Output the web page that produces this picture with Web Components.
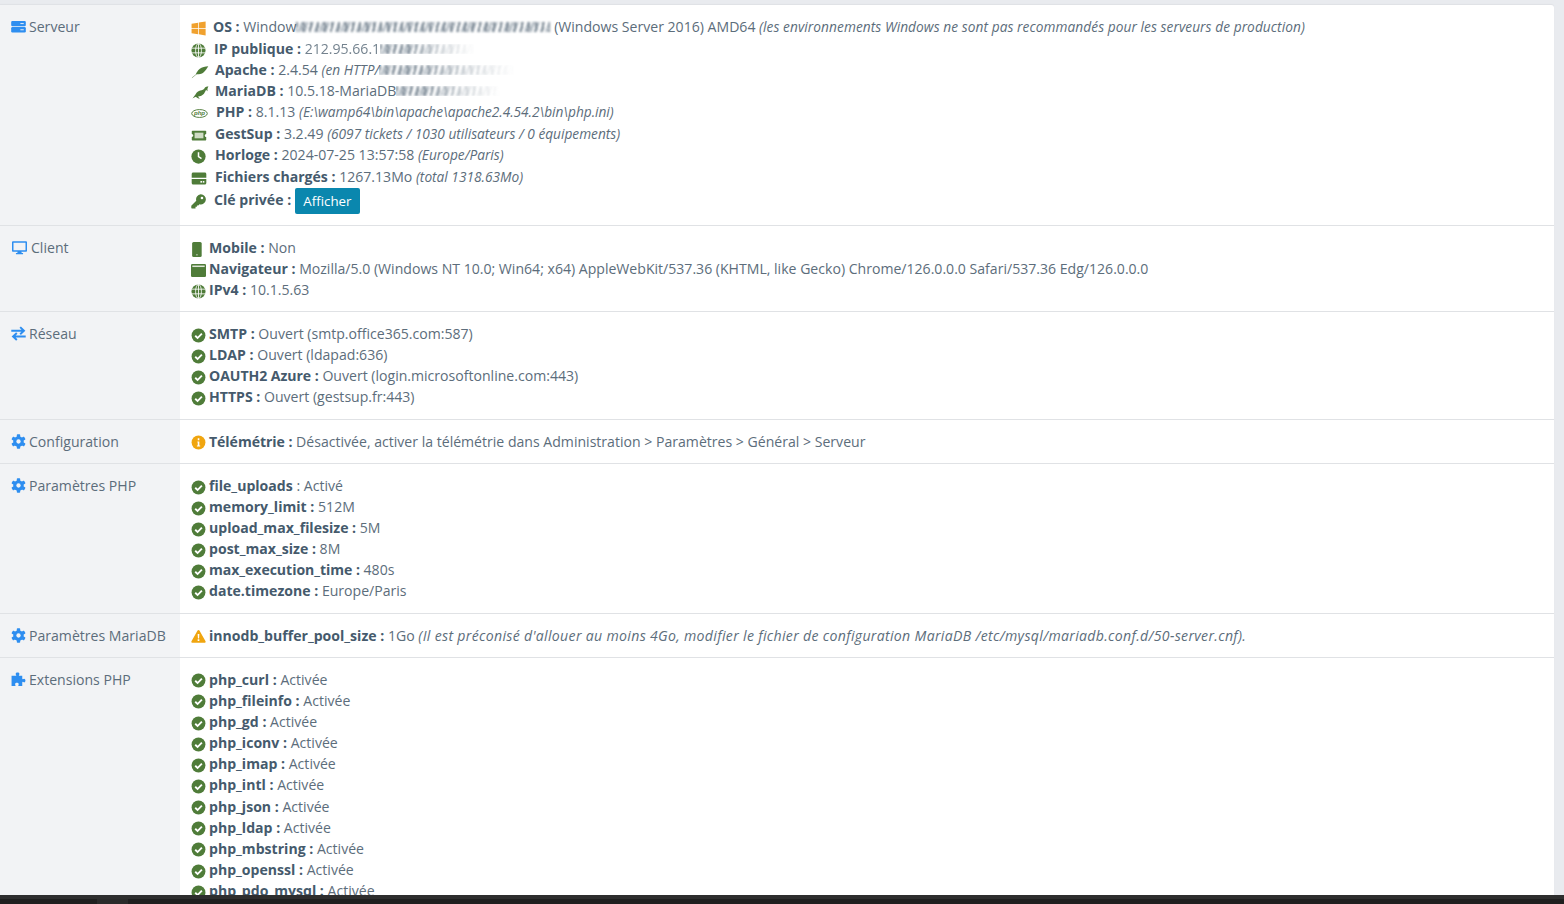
<!DOCTYPE html>
<html lang="fr">
<head>
<meta charset="utf-8">
<title>GestSup - Système</title>
<style>
    html, body {
        margin: 0;
        height: 100%;
        overflow: hidden;
        background: #e9ebef;
    }

    body {
        display: flex;
        flex-direction: column;
        font-family: "Open Sans", "Liberation Sans", sans-serif;
    }
</style>
</head>
<body>
<sys-panel>
    <info-row icon="server" label="Serveur">
        <info-line lh="22" icon="windows" gap="7"><b>OS :</b> Window<blur-smear w="254"></blur-smear> (Windows Server 2016) AMD64 <i style="letter-spacing:.07px">(les environnements Windows ne sont pas recommandés pour les serveurs de production)</i></info-line>
        <info-line lh="21" icon="globe" gap="8"><b>IP publique :</b> <span style="filter:blur(.7px);opacity:.85">212.95.66.1</span><blur-smear w="95" fade="right"></blur-smear></info-line>
        <info-line lh="21" icon="feather" gap="6"><b>Apache :</b> 2.4.54 <i>(en HTTP/</i><blur-smear w="136" fade="right"></blur-smear></info-line>
        <info-line lh="21" icon="seal" gap="5"><b>MariaDB :</b> 10.5.18-MariaDB<blur-smear w="105" fade="right"></blur-smear></info-line>
        <info-line lh="22" icon="php" gap="8"><b>PHP :</b> 8.1.13 <i style="letter-spacing:-.04px">(E:\wamp64\bin\apache\apache2.4.54.2\bin\php.ini)</i></info-line>
        <info-line lh="21" icon="ticket" gap="8"><b>GestSup :</b> 3.2.49 <i>(6097 tickets / 1030 utilisateurs / 0 équipements)</i></info-line>
        <info-line lh="22" icon="clock" gap="9"><b>Horloge :</b> 2024-07-25 13:57:58 <i>(Europe/Paris)</i></info-line>
        <info-line lh="22" icon="hdd" gap="8"><b>Fichiers chargés :</b> 1267.13Mo <i>(total 1318.63Mo)</i></info-line>
        <info-line lh="22" h="26.1" icon="key" gap="8"><b>Clé privée :</b> <small-button>Afficher</small-button></info-line>
    </info-row>

    <info-row icon="desktop" label="Client">
        <info-line icon="mobile"><b>Mobile :</b> Non</info-line>
        <info-line icon="window"><b>Navigateur :</b> Mozilla/5.0 (Windows NT 10.0; Win64; x64) AppleWebKit/537.36 (KHTML, like Gecko) Chrome/126.0.0.0 Safari/537.36 Edg/126.0.0.0</info-line>
        <info-line icon="globe"><b>IPv4 :</b> 10.1.5.63</info-line>
    </info-row>

    <info-row icon="exchange" label="Réseau">
        <info-line lh="21" icon="check"><b>SMTP :</b> Ouvert (smtp.office365.com:587)</info-line>
        <info-line lh="21" icon="check"><b>LDAP :</b> Ouvert (ldapad:636)</info-line>
        <info-line lh="21" icon="check"><b class="tight">OAUTH2 Azure :</b> Ouvert (login.microsoftonline.com:443)</info-line>
        <info-line lh="21" h="21.48" icon="check"><b>HTTPS :</b> Ouvert (gestsup.fr:443)</info-line>
    </info-row>

    <info-row icon="cog" label="Configuration">
        <info-line icon="info"><b class="tight">Télémétrie :</b> Désactivée, activer la télémétrie dans Administration &gt; Paramètres &gt; Général &gt; Serveur</info-line>
    </info-row>

    <info-row icon="cog" label="Paramètres PHP">
        <info-line lh="21" icon="check"><b>file_uploads</b> : Activé</info-line>
        <info-line lh="21" icon="check"><b>memory_limit :</b> 512M</info-line>
        <info-line lh="21" icon="check"><b>upload_max_filesize :</b> 5M</info-line>
        <info-line lh="21" icon="check"><b>post_max_size :</b> 8M</info-line>
        <info-line lh="21" icon="check"><b class="tight">max_execution_time :</b> 480s</info-line>
        <info-line lh="21" h="21.72" icon="check"><b>date.timezone :</b> Europe/Paris</info-line>
    </info-row>

    <info-row icon="cog" label="Paramètres MariaDB">
        <info-line icon="warning"><b>innodb_buffer_pool_size :</b> 1Go <i class="full">(Il est préconisé d'allouer au moins 4Go, modifier le fichier de configuration MariaDB /etc/mysql/mariadb.conf.d/50-server.cnf).</i></info-line>
    </info-row>

    <info-row icon="puzzle" label="Extensions PHP">
        <info-line icon="check"><b>php_curl :</b> Activée</info-line>
        <info-line icon="check"><b>php_fileinfo :</b> Activée</info-line>
        <info-line icon="check"><b>php_gd :</b> Activée</info-line>
        <info-line icon="check"><b>php_iconv :</b> Activée</info-line>
        <info-line icon="check"><b>php_imap :</b> Activée</info-line>
        <info-line lh="21.4" icon="check"><b>php_intl :</b> Activée</info-line>
        <info-line icon="check"><b>php_json :</b> Activée</info-line>
        <info-line icon="check"><b>php_ldap :</b> Activée</info-line>
        <info-line icon="check"><b>php_mbstring :</b> Activée</info-line>
        <info-line icon="check"><b>php_openssl :</b> Activée</info-line>
        <info-line icon="check"><b>php_pdo_mysql :</b> Activée</info-line>
    </info-row>
</sys-panel>
<task-bar></task-bar>

<script>
const ICONS = {
    server: `<svg viewBox="0 0 16 16" fill="#2e8ef0"><rect x=".2" y="2" width="15.6" height="5.8" rx="1.3"/><rect x=".2" y="8.6" width="15.6" height="5.8" rx="1.3"/><g fill="#f2f3f5"><rect x="10" y="4.4" width="3.6" height="1"/><rect x="10" y="11" width="3.6" height="1"/></g></svg>`,
    desktop: `<svg viewBox="0 0 16 16"><path fill="#2e8ef0" d="M1.2 1.400h13.600c.7 0 1.200.5 1.200 1.200v8.800c0 .7-.5 1.200-1.200 1.200H10l.4 1.300h1.400v1.200H4.200v-1.200h1.400l.4-1.300H1.200c-.7 0-1.200-.5-1.200-1.200V2.600c0-.7.500-1.200 1.200-1.200zm.4 1.600v7.800h12.800V3z"/></svg>`,
    exchange: `<svg viewBox="0 0 16 16" fill="none" stroke="#2e8ef0" stroke-width="2.100"><path d="M.3 5h13M9.800 1.200 13.800 5l-4 3.800"/><path d="M15.700 11.200h-13M6.200 7.400l-4 3.800 4 3.800"/></svg>`,
    cog: `<svg viewBox="0 0 16 16"><g fill="#2e8ef0"><circle cx="8" cy="8" r="5.600"/><rect x="6.200" y=".3" width="3.600" height="15.400" rx=".7"/><rect x="6.200" y=".3" width="3.600" height="15.400" rx=".7" transform="rotate(60 8 8)"/><rect x="6.200" y=".3" width="3.600" height="15.400" rx=".7" transform="rotate(120 8 8)"/></g><circle cx="8" cy="8" r="2.300" fill="#f2f3f5"/></svg>`,
    puzzle: `<svg viewBox="0 0 16 16"><path fill="#2e8ef0" d="M5.600 3.400c0-.5-.6-.8-.6-1.400C5 1.100 6 .6 7 .6s2 .5 2 1.400c0 .6-.6.9-.6 1.400 0 .3.200.6.700.6h2.900v3c0 .5.300.7.600.7.500 0 .8-.6 1.400-.6.800 0 1.400 1 1.400 2s-.6 2-1.400 2c-.6 0-.9-.6-1.400-.6-.3 0-.6.200-.6.700v3.600H8.400c-.5 0-.7-.3-.7-.6 0-.5.600-.8.600-1.400 0-.8-1-1.400-2-1.400s-2 .6-2 1.400c0 .6.600.9.600 1.400 0 .3-.2.6-.7.6H.6V4h4.300c.5 0 .7-.3.7-.6z"/></svg>`,
    windows: `<svg viewBox="0 0 16 16" fill="#f0a12e"><path d="M.6 3 7.500 1.900v5.700H.6z"/><path d="M8.300 1.700 15.600.6v7H8.300z"/><path d="M.6 8.400h6.900V14L.6 13.100z"/><path d="M8.300 8.400h7.300v7l-7.300-1.200z"/></svg>`,
    globe: `<svg viewBox="0 0 16 16"><circle cx="8" cy="8" r="7.500" fill="#4f7c39"/><g fill="none" stroke="#fff" stroke-width=".9"><ellipse cx="8" cy="8" rx="3.100" ry="7.500"/><path d="M8 .5v15M.5 5.500h15M.5 10.500h15"/></g></svg>`,
    feather: `<svg viewBox="0 0 18 16"><path fill="#4f7c39" d="M17.800 2.400c-3 .1-6.800.8-9.300 2.900C6.400 7.100 5.200 9.300 4.600 11c2.400.2 6-.3 8.100-2 2.200-1.800 3.900-4.400 5.100-6.600z"/><path d="M.4 14.800 9 7.600" stroke="#4f7c39" stroke-width=".9" opacity=".6" fill="none"/></svg>`,
    seal: `<svg viewBox="0 0 18 16"><path fill="#4f7c39" d="M17.600 1c-1 .4-2.100.4-3.100 1-1 .7-1.600 2.200-3 3.100-1.600 1-3.800.7-5.500 2C4.300 8.400 3.300 10.900.4 14.400c1.300-.8 2.500-1.600 3.800-1.900.7 1 2.200 2.100 4.200 2.200-.8-.7-1.600-1.400-1.800-2.600 2.200-.2 4.600-1.200 6.100-2.900 1.200-1.400 1.500-3 2.500-4.100.2.800 1 1.400 1.500 1.600-.3-.7-.4-1.400-.3-2.300.1-1.400 1-2.200.9-3.400z"/></svg>`,
    php: `<svg viewBox="0 0 18 16"><ellipse cx="9" cy="8" rx="8.300" ry="4.200" fill="#fff" stroke="#4f7c39" stroke-width="1"/><text x="9" y="10" font-size="6.500" font-weight="700" font-style="italic" text-anchor="middle" font-family="Liberation Sans, sans-serif" fill="#4f7c39">php</text></svg>`,
    ticket: `<svg viewBox="0 0 16 16"><path fill="#4f7c39" d="M1 2.800h14c.4 0 .7.300.7.700v2.900a1.600 1.600 0 0 0 0 3.200v2.900c0 .4-.3.700-.7.700H1c-.4 0-.7-.3-.7-.7V9.600a1.600 1.600 0 0 0 0-3.200V3.500c0-.4.300-.7.700-.7z"/><rect x="3.300" y="5" width="9.400" height="6" fill="#cfdcc4"/></svg>`,
    clock: `<svg viewBox="0 0 16 16"><circle cx="8" cy="8" r="7.600" fill="#4f7c39"/><path d="M8 3.400V8l3.200 2.200" fill="none" stroke="#fff" stroke-width="1.600"/></svg>`,
    hdd: `<svg viewBox="0 0 16 16" fill="#4f7c39"><path d="M1.800 1.500h12.400c.9 0 1.600.7 1.600 1.600v4H.2v-4c0-.9.700-1.600 1.600-1.600z"/><path d="M.2 8.400h15.600v4.500c0 .9-.7 1.600-1.600 1.600H1.800c-.9 0-1.600-.7-1.600-1.600z"/><g fill="#fff"><rect x="9.500" y="10.700" width="1.700" height="1.700"/><rect x="12" y="10.700" width="1.700" height="1.700"/></g></svg>`,
    key: `<svg viewBox="0 0 16 16"><path fill="#4f7c39" fill-rule="evenodd" d="M10.300.3a5.400 5.400 0 1 1-1.300 10.600l-1.200 1.300H6.300v1.500H4.800v1.700H1a.7.700 0 0 1-.7-.7v-2.300l5.300-5.300A5.400 5.400 0 0 1 10.300.3zm1.400 2.600a1.400 1.400 0 1 0 0 2.800 1.400 1.400 0 0 0 0-2.800z"/></svg>`,
    mobile: `<svg viewBox="0 0 16 16"><rect x="1.200" y="0" width="10.200" height="16" rx="1.600" fill="#4f7c39"/><rect x="5.300" y="13" width="2" height="1.300" fill="#a9bd9c"/></svg>`,
    window: `<svg viewBox="0 0 16 16"><rect x="0" y="1" width="16" height="14" rx="1.300" fill="#4f7c39"/><rect x="1.400" y="2.700" width="13.200" height="1.600" fill="#dfe7d8"/></svg>`,
    check: `<svg viewBox="0 0 16 16"><circle cx="8" cy="8" r="7.400" fill="#4f7c39"/><path d="M4.500 8.300 7 10.700l4.600-4.800" fill="none" stroke="#fff" stroke-width="2"/></svg>`,
    info: `<svg viewBox="0 0 16 16"><circle cx="8" cy="8" r="7.400" fill="#f0a50f"/><path fill="#fff" d="M6.800 7h2.100v4.100h.9v1.100H6.300v-1.100h.9V8.100h-.4zM7.200 3.500h1.700v2H7.200z"/></svg>`,
    warning: `<svg viewBox="0 0 16 16"><path fill="#f0a50f" d="M8 1.100c.4 0 .8.200 1 .600l6.500 11.300c.4.800-.1 1.700-1 1.700h-13c-.9 0-1.400-.9-1-1.700L7 1.700c.2-.4.600-.6 1-.6z"/><path fill="#fff" d="M7.100 5.200h1.800l-.3 5H7.400zM7.100 11h1.800v1.800H7.100z"/></svg>`,
}

// icons wider than the usual 15px
const ICON_WIDTH = { desktop: 17, feather: 18, seal: 19, php: 17, ticket: 16, hdd: 16 }

class SysPanel extends HTMLElement {
    constructor() {
        super()
        const shadow = this.attachShadow({ mode: 'open' })
        shadow.innerHTML = `
        <style>
            :host {
                display: block;
                flex: 1;
                min-height: 0;
                overflow: hidden;
                margin: 5px 10px 0 0;
                background: #fff;
                border-top-right-radius: 3px;
                box-shadow: 0 -1px 1px #dfe1e5;
                font-size: 14.08px;
                line-height: 1.5;
                color: #5c6d7b;
            }
        </style>
        <slot></slot>
        `
    }
}

class InfoRow extends HTMLElement {
    constructor() {
        super()
        const shadow = this.attachShadow({ mode: 'open' })
        const icon = this.getAttribute('icon')
        shadow.innerHTML = `
        <style>
            :host {
                display: grid;
                grid-template-columns: 180px 1fr;
                border-bottom: 1px solid #e0e2e5;
            }

            .head {
                background: #f2f3f5;
                padding: 11px 0 11px 11px;
                color: #5c6d7b;
                display: flex;
                align-items: flex-start;
            }

            .head svg {
                width: ${ICON_WIDTH[icon] || 15}px;
                height: 15px;
                margin: 3px 3px 0 0;
                flex: none;
            }

            .body {
                padding: 11px;
                min-width: 0;
            }
        </style>
        <div class="head">${ICONS[icon]}<span>${this.getAttribute('label')}</span></div>
        <div class="body"><slot></slot></div>
        `
    }
}

class InfoLine extends HTMLElement {
    constructor() {
        super()
        const shadow = this.attachShadow({ mode: 'open' })
        const gap = this.getAttribute('gap') || 3
        const icon = this.getAttribute('icon')
        const lh = this.getAttribute('lh') || 21.12
        const h = this.getAttribute('h') || lh
        shadow.innerHTML = `
        <style>
            :host {
                display: block;
                white-space: nowrap;
                height: ${h}px;
                line-height: ${lh}px;
            }

            svg {
                width: ${ICON_WIDTH[icon] || 15}px;
                height: 15px;
                vertical-align: -1.5px;
                margin-right: ${gap}px;
                margin-top: -2px;
                margin-bottom: -2px;
            }

            ::slotted(b) {
                font-weight: 700;
                color: #455a6c;
            }

            ::slotted(b.tight) {
                letter-spacing: -.05px;
            }

            ::slotted(i) {
                font-size: 13.7px;
                line-height: 1;
                font-style: italic;
            }

            ::slotted(i.full) {
                font-size: 14.08px;
                letter-spacing: .325px;
            }
        </style>
        ${ICONS[icon]}<slot></slot>
        `
    }
}

class SmallButton extends HTMLElement {
    constructor() {
        super()
        const shadow = this.attachShadow({ mode: 'open' })
        shadow.innerHTML = `
        <style>
            :host {
                display: inline-block;
                background: #0a87ae;
                color: #fff;
                font-size: 13.3px;
                line-height: 18px;
                padding: 4px 8.5px;
                border-radius: 2px;
                vertical-align: -1px;
            }
        </style>
        <slot></slot>
        `
    }
}

// censored zones of the original shot: a smear, no readable text behind it
class BlurSmear extends HTMLElement {
    constructor() {
        super()
        const shadow = this.attachShadow({ mode: 'open' })
        const w = this.getAttribute('w')
        const fade = this.getAttribute('fade') === 'right'
            ? 'linear-gradient(90deg, #000 30%, rgba(0,0,0,.4) 65%, transparent)'
            : 'none'
        shadow.innerHTML = `
        <style>
            :host {
                display: inline-block;
                width: ${w}px;
                height: 10px;
                vertical-align: 0;
                filter: blur(.9px);
                opacity: .75;
                -webkit-mask-image: ${fade};
                mask-image: ${fade};
                background:
                    repeating-linear-gradient(96deg, #4f6070 0 2px, transparent 2px 7px),
                    repeating-linear-gradient(108deg, #8997a3 0 2px, transparent 2px 5px);
            }
        </style>
        `
    }
}

class TaskBar extends HTMLElement {
    constructor() {
        super()
        const shadow = this.attachShadow({ mode: 'open' })
        shadow.innerHTML = `
        <style>
            :host {
                display: block;
                flex: none;
                height: 9px;
                background: #1f1f1f;
                border-top: 4px solid #2e2e2e;
                box-sizing: border-box;
            }

            .tab {
                width: 31px;
                height: 100%;
                margin-left: 97px;
                background: #2a2a2a;
            }
        </style>
        <div class="tab"></div>
        `
    }
}

customElements.define('sys-panel', SysPanel)
customElements.define('info-row', InfoRow)
customElements.define('info-line', InfoLine)
customElements.define('small-button', SmallButton)
customElements.define('blur-smear', BlurSmear)
customElements.define('task-bar', TaskBar)
</script>
</body>
</html>
